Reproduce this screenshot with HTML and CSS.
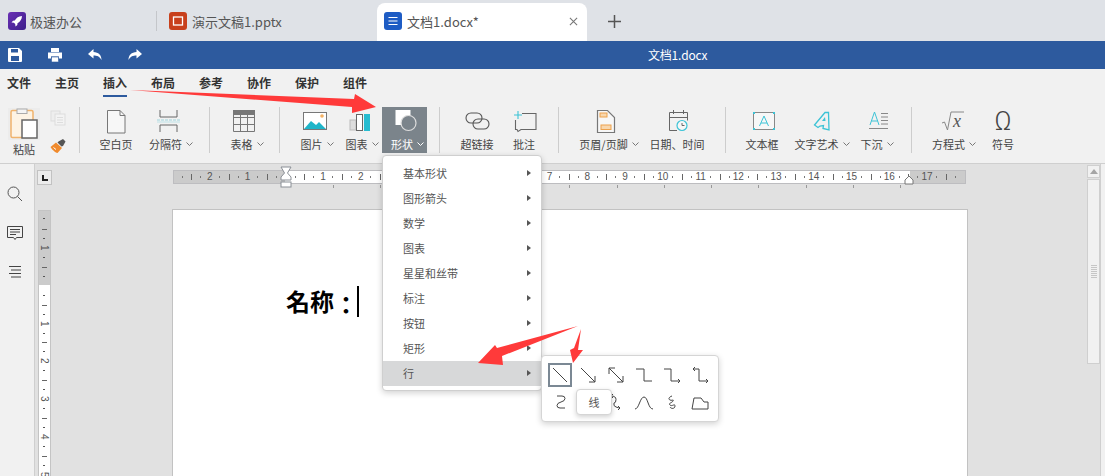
FILE: index.html
```html
<!DOCTYPE html>
<html lang="zh">
<head>
<meta charset="utf-8">
<title>文档1.docx</title>
<link rel="stylesheet" href="styles.css">
</head>
<body>
<div class="app">
  <div class="tabbar">
    <div class="tab tab-home">
      <svg class="tab-icon" viewBox="0 0 18 18"><defs><linearGradient id="pg" x1="0" y1="0" x2="1" y2="1"><stop offset="0" stop-color="#6a2fb5"/><stop offset="1" stop-color="#3c1f8a"/></linearGradient></defs><rect width="18" height="18" rx="3" fill="url(#pg)"/><path d="M14 4c-3.500.2-5.600 1.800-7.200 4.500L5 8.700 3.500 10.500l2.400.3 1.300 1.300.3 2.400 1.800-1.500.2-1.800C12.200 9.600 13.800 7.500 14 4z" fill="#fff"/></svg>
      <span>极速办公</span>
    </div>
    <div class="tab tab-ppt">
      <svg class="tab-icon" viewBox="0 0 18 18"><rect width="18" height="18" rx="3" fill="#c8401c"/><rect x="4.500" y="5" width="9" height="8" fill="none" stroke="#fff" stroke-width="1.300"/></svg>
      <span>演示文稿1.pptx</span>
    </div>
    <div class="tab tab-active">
      <svg class="tab-icon" viewBox="0 0 18 18"><rect width="18" height="18" rx="3" fill="#1e5cc4"/><path d="M4.500 5.500h9M4.500 9h9M4.500 12.500h9" stroke="#fff" stroke-width="1.200"/></svg>
      <span class="tab-name">文档1.docx*</span>
      <svg class="tab-close" viewBox="0 0 10 10"><path d="M1 1l8 8M9 1l-8 8" stroke="#777" stroke-width="1.200"/></svg>
    </div>
    <svg class="tab-plus" viewBox="0 0 13 13"><path d="M6.500 0v13M0 6.500h13" stroke="#555" stroke-width="1.500"/></svg>
  </div>

  <div class="titlebar">
    <div class="quick">
      <svg class="quick-icon" viewBox="0 0 16 16"><path d="M2 1h10l3 3v10a1 1 0 0 1-1 1H2a1 1 0 0 1-1-1V2a1 1 0 0 1 1-1z" fill="#fff"/><rect x="4" y="2" width="7" height="3.500" fill="#2d5a9e"/><rect x="4" y="9" width="8" height="5" fill="#2d5a9e"/></svg>
      <svg class="quick-icon" viewBox="0 0 16 16"><rect x="4" y="1" width="8" height="4" fill="#fff"/><path d="M1 5.500h14v6h-3v-2H4v2H1z" fill="#fff"/><rect x="4.500" y="10" width="7" height="5" fill="#fff" stroke="#2d5a9e" stroke-width=".6"/></svg>
      <svg class="quick-icon" viewBox="0 0 16 16"><path d="M6.500 2L1 7l5.500 4.500V8.500c3.500 0 6 .8 8 4.500 0-5-3-7.800-8-8z" fill="#fff"/></svg>
      <svg class="quick-icon" viewBox="0 0 16 16"><path d="M9.500 2L15 7l-5.500 4.500V8.500c-3.500 0-6 .8-8 4.500 0-5 3-7.800 8-8z" fill="#fff"/></svg>
    </div>
    <div class="doc-title">文档1.docx</div>
  </div>

  <nav class="menubar">
    <span class="menu-item">文件</span>
    <span class="menu-item">主页</span>
    <span class="menu-item menu-current">插入</span>
    <span class="menu-item">布局</span>
    <span class="menu-item">参考</span>
    <span class="menu-item">协作</span>
    <span class="menu-item">保护</span>
    <span class="menu-item">组件</span>
  </nav>

  <div class="toolbar">
    <div class="tool tool-paste">
      <svg class="icon-paste" viewBox="0 0 32 32"><rect x="3" y="2.500" width="22" height="27" rx="1.500" fill="#fdf3e4" stroke="#f0b36c" stroke-width="1.500"/><rect x="9" y="1" width="10" height="4.500" fill="#f4f4f4" stroke="#aaa"/><rect x="14" y="12" width="15" height="18" fill="#fff" stroke="#666" stroke-width="1.500"/></svg>
      <span class="tool-label">粘贴</span>
    </div>
    <div class="tool-stack">
      <svg class="icon-small" viewBox="0 0 16 16"><rect x="1" y="1" width="9" height="10" fill="#eee" stroke="#ddd"/><rect x="5" y="4" width="10" height="11" fill="#f3f3f3" stroke="#ddd"/><path d="M7 7.500h6M7 10h6M7 12.500h6" stroke="#ddd"/></svg>
      <svg class="icon-small" viewBox="0 0 16 16"><path d="M6 4.500L12 10l-4.500 5C5 14.500 1.500 11 .5 9z" fill="#f08a2c"/><path d="M3.500 9.500l2.500 2" stroke="#fff"/><path d="M8.500 3.500L13 1l2.500 2.500L13 8l-1.500.5-4-4z" fill="#555"/></svg>
    </div>
    <i class="sep sep-a"></i>
    <div class="tool w-blank">
      <svg class="tool-icon" viewBox="0 0 32 26"><path d="M7.500 2.500H20l5 5v17.500H7.500z" fill="#f7f7f7" stroke="#777"/><path d="M20 2.500v5h5" fill="none" stroke="#777"/></svg>
      <span class="tool-label">空白页</span>
    </div>
    <div class="tool w-break">
      <svg class="tool-icon icon-left" viewBox="0 0 32 26"><path d="M8 2v7h17V2M8 24v-7h17v7" fill="none" stroke="#666"/><path d="M5 12h23" stroke="#9fd6de" stroke-width="1.200" stroke-dasharray="3 1"/><path d="M5 14h23" stroke="#bfe3e8"/></svg>
      <span class="tool-label">分隔符<svg class="chev" viewBox="0 0 7 4"><path d="M.5.500L3.500 3.500 6.500.5" fill="none" stroke="#777"/></svg></span>
    </div>
    <i class="sep sep-b"></i>
    <div class="tool w-table">
      <svg class="tool-icon" viewBox="0 0 32 26"><rect x="5" y="2" width="22" height="5" fill="#777"/><path d="M5.500 2.500h21v21h-21zM5.500 9.500h21M5.500 16.500h21M12.500 2.500v21M19.500 2.500v21" fill="none" stroke="#777"/></svg>
      <span class="tool-label">表格<svg class="chev" viewBox="0 0 7 4"><path d="M.5.500L3.500 3.500 6.500.5" fill="none" stroke="#777"/></svg></span>
    </div>
    <i class="sep sep-b"></i>
    <div class="tool w-picture">
      <svg class="tool-icon" viewBox="0 0 32 26"><rect x="4.500" y="4.500" width="23" height="17" fill="#fff" stroke="#777"/><path d="M5 21l7-8 5 4 3-3 7 7z" fill="#1fb5c9"/><circle cx="23" cy="8" r="1.800" fill="#f4b264"/></svg>
      <span class="tool-label">图片<svg class="chev" viewBox="0 0 7 4"><path d="M.5.500L3.500 3.500 6.500.5" fill="none" stroke="#777"/></svg></span>
    </div>
    <div class="tool w-chart">
      <svg class="tool-icon" viewBox="0 0 32 26"><rect x="6" y="12" width="6" height="10" fill="#ddd" stroke="#bbb"/><rect x="12.500" y="6.500" width="6" height="16" fill="#fff" stroke="#666"/><rect x="20" y="6" width="6" height="17" fill="#27bcd0"/></svg>
      <span class="tool-label">图表<svg class="chev" viewBox="0 0 7 4"><path d="M.5.500L3.500 3.500 6.500.5" fill="none" stroke="#777"/></svg></span>
    </div>
    <div class="tool w-shape">
      <svg class="tool-icon" viewBox="0 0 32 26"><rect x="6.500" y="2" width="15" height="15" fill="#fff"/><circle cx="19.500" cy="15" r="7.500" fill="#7b848b" stroke="#ddd" stroke-width="1.200"/></svg>
      <span class="tool-label">形状<svg class="chev" viewBox="0 0 7 4"><path d="M.5.500L3.500 3.500 6.500.5" fill="none" stroke="#fff"/></svg></span>
    </div>
    <i class="sep sep-c"></i>
    <div class="tool w-link">
      <svg class="tool-icon" viewBox="0 0 32 26"><rect x="5" y="5" width="16" height="10" rx="5" fill="none" stroke="#555" stroke-width="1.100"/><rect x="12" y="11" width="16" height="10" rx="5" fill="none" stroke="#555" stroke-width="1.100"/></svg>
      <span class="tool-label">超链接</span>
    </div>
    <div class="tool w-note">
      <svg class="tool-icon" viewBox="0 0 32 26"><path d="M14 5.500h14v16H13l-3 2-1-2H7.500V12" fill="none" stroke="#666" stroke-width="1.100"/><path d="M10 3v8M6 7h8" stroke="#3cc3d6" stroke-width="1.100"/></svg>
      <span class="tool-label">批注</span>
    </div>
    <i class="sep sep-d"></i>
    <div class="tool w-header">
      <svg class="tool-icon" viewBox="0 0 32 26"><path d="M6.500 2.500h10l7 7v15h-17z" fill="#f7f7f7" stroke="#777" stroke-width="1.200"/><rect x="9" y="5" width="7" height="4" fill="#f8d7ae" stroke="#eda24d"/><rect x="10" y="17" width="10" height="4.500" fill="#f8d7ae" stroke="#eda24d"/></svg>
      <span class="tool-label">页眉/页脚<svg class="chev" viewBox="0 0 7 4"><path d="M.5.500L3.500 3.500 6.500.5" fill="none" stroke="#777"/></svg></span>
    </div>
    <div class="tool w-date">
      <svg class="tool-icon" viewBox="0 0 32 26"><path d="M16 22.500H8.500v-18h18v8M8.500 9.500h18M12.500 2v4M22.500 2v4" fill="none" stroke="#666"/><circle cx="21" cy="17.500" r="5" fill="#f7f7f7" stroke="#3cc3d6" stroke-width="1.200"/><path d="M21 15v2.500h2.500" fill="none" stroke="#666"/></svg>
      <span class="tool-label">日期、时间</span>
    </div>
    <i class="sep sep-e"></i>
    <div class="tool w-textbox">
      <svg class="tool-icon" viewBox="0 0 32 26"><rect x="7.500" y="4.500" width="21" height="17" fill="#f7f7f7" stroke="#888"/><path d="M13.500 18l4.500-10 4.500 10M15 15h6" fill="none" stroke="#3cc3d6"/><g fill="#3cc3d6"><rect x="7" y="4" width="2" height="2"/><rect x="27" y="4" width="2" height="2"/><rect x="7" y="20" width="2" height="2"/><rect x="27" y="20" width="2" height="2"/></g></svg>
      <span class="tool-label">文本框</span>
    </div>
    <div class="tool w-art">
      <svg class="tool-icon" viewBox="0 0 32 26"><path d="M8.500 17L19 4.500h3.500l.5 17.500-6-1.500.5-3-3.500.5-2 1.500z" fill="none" stroke="#3cc3d6" stroke-width="1.300"/><path d="M16 13l3-4 .5 4z" fill="#3cc3d6"/></svg>
      <span class="tool-label">文字艺术<svg class="chev" viewBox="0 0 7 4"><path d="M.5.500L3.500 3.500 6.500.5" fill="none" stroke="#777"/></svg></span>
    </div>
    <div class="tool w-drop">
      <svg class="tool-icon" viewBox="0 0 32 26"><path d="M9 17l4.500-13L18 17M10.500 13h6" fill="none" stroke="#3cc3d6"/><path d="M20 5.500h7M20 9h7M20 12.500h7M20 16h7M8 20.500h19" stroke="#888"/></svg>
      <span class="tool-label">下沉<svg class="chev" viewBox="0 0 7 4"><path d="M.5.500L3.500 3.500 6.500.5" fill="none" stroke="#777"/></svg></span>
    </div>
    <i class="sep sep-f"></i>
    <div class="tool w-eq">
      <svg class="tool-icon" viewBox="0 0 32 26"><path d="M6 15l2.500-1 3 8L15 4h13" fill="none" stroke="#888"/><text class="eq-x" x="17" y="19">x</text></svg>
      <span class="tool-label">方程式<svg class="chev" viewBox="0 0 7 4"><path d="M.5.500L3.500 3.500 6.500.5" fill="none" stroke="#777"/></svg></span>
    </div>
    <div class="tool w-sym">
      <span class="omega">Ω</span>
      <span class="tool-label">符号</span>
    </div>
  </div>

  <div class="workspace">
    <aside class="sidebar">
      <svg class="side-icon" viewBox="0 0 16 16"><circle cx="6.500" cy="6.500" r="5.500" fill="none" stroke="#555"/><path d="M10.500 10.500L15 15" stroke="#555"/></svg>
      <svg class="side-icon" viewBox="0 0 16 16"><path d="M.5 1.500h15v11H9.500L8 14.500 6.500 12.500H.5z" fill="none" stroke="#444"/><path d="M3 4.500h10M3 7h10M3 9.500h6" stroke="#444"/></svg>
      <svg class="side-icon" viewBox="0 0 16 16"><path d="M2 2.500h12M4 6h10M2 9.500h12M4 13h10" stroke="#444"/></svg>
    </aside>
    <main class="canvas">
      <div class="ruler-row">
        <div class="tab-stop"><i></i></div>
        <div class="hruler">
          <span class="hcell-start"></span>
          <span class="hcell">2</span><span class="hcell">1</span><span class="hcell"></span>
          <span class="hcell">1</span><span class="hcell">2</span><span class="hcell">3</span><span class="hcell">4</span><span class="hcell">5</span><span class="hcell">6</span><span class="hcell">7</span><span class="hcell">8</span><span class="hcell">9</span><span class="hcell">10</span><span class="hcell">11</span><span class="hcell">12</span><span class="hcell">13</span><span class="hcell">14</span><span class="hcell">15</span><span class="hcell">16</span><span class="hcell">17</span>
          <span class="hcell-end"></span>
        </div>
      </div>
      <div class="tab-marks"></div>
      <div class="page-row">
        <div class="vruler">
          <span class="vcell-start"></span>
          <span class="vcell">1</span><span class="vcell"></span><span class="vcell">1</span><span class="vcell">2</span><span class="vcell">3</span><span class="vcell">4</span><span class="vcell">5</span>
        </div>
        <div class="page">
          <p class="doc-line" lang="zh-Hant">名称<span class="colon">：</span><i class="caret"></i></p>
        </div>
      </div>
    </main>
    <div class="scrollbar">
      <div class="scroll-btn"><i></i></div>
      <div class="scroll-thumb"><i></i></div>
    </div>
    <div class="edge"></div>
  </div>

  <svg class="indent indent-left" viewBox="0 0 12 22"><path d="M1 1h10L7.500 7 11 11v3H1v-3l3.500-4z" fill="#fff" stroke="#8a8f96"/><rect x="1" y="16" width="10" height="5" fill="#fff" stroke="#8a8f96"/></svg>
  <svg class="indent indent-right" viewBox="0 0 10 10"><path d="M1 9V5l4-4 4 4v4z" fill="#fff" stroke="#777"/></svg>

  <ul class="shape-menu">
    <li class="shape-item">基本形状</li>
    <li class="shape-item">图形箭头</li>
    <li class="shape-item">数学</li>
    <li class="shape-item">图表</li>
    <li class="shape-item">星星和丝带</li>
    <li class="shape-item">标注</li>
    <li class="shape-item">按钮</li>
    <li class="shape-item">矩形</li>
    <li class="shape-item shape-hover">行</li>
  </ul>

  <div class="line-menu">
    <svg class="line-cell line-selected" viewBox="0 0 24 24"><path d="M5 5l14 14"/></svg>
    <svg class="line-cell" viewBox="0 0 24 24"><path d="M5 5l14 14M19 13v6h-6"/></svg>
    <svg class="line-cell" viewBox="0 0 24 24"><path d="M5 5l14 14M19 13v6h-6M5 11V5h6"/></svg>
    <svg class="line-cell" viewBox="0 0 24 24"><path d="M4 6h8v12h8"/></svg>
    <svg class="line-cell" viewBox="0 0 24 24"><path d="M4 6h7v12h9M18 16l2 2-2 2"/></svg>
    <svg class="line-cell" viewBox="0 0 24 24"><path d="M5 6h6v12h9M7 4L5 6l2 2M18 16l2 2-2 2"/></svg>
    <svg class="line-cell" viewBox="0 0 24 24"><path d="M9 5h5q3 0 3 2.500T13 11q-4 1-4 3.500T12 17h5"/></svg>
    <svg class="line-cell" viewBox="0 0 24 24"><path d="M5 5h5q3 0 3 2.500T9 11"/></svg>
    <svg class="line-cell" viewBox="0 0 24 24"><path d="M7 5q5 0 5 3.500T10 12q-1 3 2 4 3 1 4 1M14 15l2 2-2 2M9 3L7 5l2 2"/></svg>
    <svg class="line-cell" viewBox="0 0 24 24"><path d="M3 18C7 18 8 6 12 6s4 12 9 12"/></svg>
    <svg class="line-cell" viewBox="0 0 24 24"><path d="M12 5c-3 1-4 3-2 4s4-1 3 1-5 2-3 4 5-2 5 1-4 3-5 1"/></svg>
    <svg class="line-cell" viewBox="0 0 24 24"><path d="M4 18L6 7h7l3 4h4v7z"/></svg>
  </div>
  <div class="tooltip">线</div>

  <svg class="arrows" viewBox="0 0 1105 476">
    <path d="M130 90L354 99 355 94 376 107 352 113 352 107z"/>
    <path d="M578 326L502 356 503 365 478 363 495 345 497 348z"/>
    <path d="M581 329L578 350 583 350 573 363 570 350 574 348z"/>
  </svg>
</div>
</body>
</html>
```

FILE: styles.css
```css
* { box-sizing: border-box; }
html, body { margin: 0; padding: 0; }
body { font-family: "Noto Sans CJK SC", "Noto Sans", sans-serif; color: #333; }

.app { position: relative; width: 1105px; height: 476px; overflow: hidden; display: flex; flex-direction: column; background: #f1f1f1; }

/* Tabs */
.tabbar { height: 41px; flex: none; display: flex; align-items: flex-end; background: #dfe2e7; padding-left: 8px; }
.tab { height: 38px; display: flex; align-items: center; gap: 5px; padding-bottom: 2px; font-size: 13px; color: #555; }
.tab-icon { width: 18px; height: 18px; flex: none; }
.tab-home { width: 148px; gap: 4px; }
.tab-ppt { width: 221px; padding-left: 13px; position: relative; }
.tab-ppt::before { content: ""; position: absolute; left: 0; top: 8px; width: 1px; height: 20px; background: #c4c6ca; }
.tab-active { width: 210px; background: #fff; border-radius: 8px 8px 0 0; padding: 0 9px 2px 7px; }
.tab-name { flex: 1; }
.tab-close { width: 9px; height: 9px; }
.tab-plus { width: 13px; height: 13px; margin: 0 0 13px 21px; }

/* Title bar */
.titlebar { height: 28px; flex: none; background: #2d5a9e; position: relative; display: flex; align-items: center; }
.quick { display: flex; gap: 24px; padding-left: 7px; }
.quick-icon { width: 16px; height: 16px; }
.doc-title { position: absolute; left: 648px; top: 4px; font-size: 12px; line-height: 20px; color: #fff; letter-spacing: -.2px; }

/* Menu */
.menubar { height: 34px; flex: none; display: flex; padding-left: 7px; gap: 24px; background: #f1f1f1; }
.menu-item { width: 24px; height: 28px; font-size: 12px; line-height: 28px; font-weight: 700; color: #333; white-space: nowrap; }
.menu-current { border-bottom: 2px solid #2d5a9e; }

/* Toolbar */
.toolbar { height: 61px; flex: none; display: flex; padding-top: 4px; border-bottom: 1px solid #cfcfcf; background: #f1f1f1; }
.tool { height: 46px; flex: none; display: flex; flex-direction: column; align-items: center; padding-top: 1px; }
.tool-icon { width: 32px; height: 26px; flex: none; }
.icon-left { margin-right: 6px; }
.tool-label { display: flex; align-items: center; font-size: 11px; line-height: 16px; margin-top: 2px; white-space: nowrap; color: #444; }
.chev { width: 7px; height: 4px; margin-left: 4px; }
.tool-paste { width: 46px; align-items: flex-start; padding-left: 8px; height: 54px; }
.tool-paste .tool-label { margin: 1px 0 0 5px; }
.icon-paste { width: 32px; height: 32px; background: #ececec; }
.tool-stack { width: 24px; display: flex; flex-direction: column; align-items: center; gap: 12px; padding-top: 3px; }
.icon-small { width: 16px; height: 16px; }
.sep { display: block; flex: none; width: 1px; height: 46px; background: #cdcdcd; }
.sep-a { margin: 0 8px 0 9px; }
.sep-b { margin: 0 10px 0 11px; }
.sep-c { margin: 0 11px 0 12px; }
.sep-d { margin: 0 12px 0 13px; }
.sep-e { margin: 0 13px 0 14px; }
.sep-f { margin: 0 15px 0 16px; }
.w-blank { width: 56px; }
.w-break { width: 54px; }
.w-table { width: 48px; }
.w-picture { width: 50px; }
.w-chart { width: 40px; margin-right: 2px; }
.w-shape { width: 45px; background: #7b848b; }
.w-shape .tool-label { color: #fff; }
.w-table .tool-label, .w-shape .tool-label { margin-left: 6px; }
.w-picture .tool-label, .w-chart .tool-label, .w-header .tool-label, .w-eq .tool-label { margin-left: 4px; }
.w-link { width: 52px; }
.w-note { width: 42px; }
.w-header { width: 72px; }
.w-date { width: 68px; }
.w-textbox { width: 46px; }
.w-art { width: 74px; }
.w-drop { width: 36px; }
.w-eq { width: 50px; }
.w-sym { width: 52px; }
.eq-x { font-family: "Liberation Serif", serif; font-style: italic; font-size: 18px; fill: #555; }
.omega { height: 26px; font-family: Roboto, sans-serif; font-weight: 300; font-size: 26px; line-height: 26px; color: #444; }

/* Workspace */
.workspace { flex: 1; display: flex; min-height: 0; }
.sidebar { width: 35px; flex: none; display: flex; flex-direction: column; align-items: center; gap: 23px; padding: 22px 4px 0 0; background: #f1f1f1; border-right: 1px solid #cfcfcf; }
.side-icon { width: 16px; height: 16px; }
.canvas { width: 1052px; flex: none; background: #e1e1e1; padding-top: 6px; }
.ruler-row { display: flex; height: 15px; }
.tab-stop { width: 15px; height: 15px; margin-left: 2px; border: 1px solid #c2c2c2; background: #ececec; position: relative; }
.tab-stop i { position: absolute; left: 4px; top: 4px; width: 6px; height: 6px; border-left: 2px solid #222; border-bottom: 2px solid #222; }
.hruler { width: 793px; height: 14px; margin-left: 121px; display: flex; box-shadow: inset 0 0 0 1px #bdbdc0; background: linear-gradient(to right, #cbcbcb 112px, #fff 112px, #fff 737px, #cbcbcb 737px); }
.hcell, .hcell-start, .hcell-end { display: block; flex: none; height: 14px; font: 10px/14px "Liberation Sans", sans-serif; color: #555; text-align: center; }
.hcell { width: 37.75px; background: linear-gradient(#777, #777) 9px 6px / 1px 2px no-repeat, linear-gradient(#777, #777) 28px 6px / 1px 2px no-repeat, linear-gradient(#666, #666) 0 4px / 1px 6px no-repeat; }
.hcell-start { width: 18px; background: linear-gradient(#777, #777) 9px 6px / 1px 2px no-repeat; }
.hcell-end { width: 20px; background: linear-gradient(#777, #777) 9px 6px / 1px 2px no-repeat, linear-gradient(#666, #666) 0 4px / 1px 6px no-repeat; }
.tab-marks { width: 570px; height: 3px; margin: 0 0 21px 298px; background: repeating-linear-gradient(to right, #999 0 1px, transparent 1px 47.25px); }
.page-row { display: flex; align-items: flex-start; }
.vruler { width: 13px; height: 270px; margin: 1px 0 0 3px; flex: none; box-shadow: inset 0 0 0 1px #c4c4c4; background: linear-gradient(to bottom, #cbcbcb 75px, #fff 75px); }
.vcell, .vcell-start { display: block; width: 13px; font: 10px/13px "Liberation Sans", sans-serif; color: #555; writing-mode: vertical-rl; text-align: center; }
.vcell { height: 37.75px; background: linear-gradient(#555, #555) 5px 9px / 2px 1px no-repeat, linear-gradient(#555, #555) 5px 28px / 2px 1px no-repeat, linear-gradient(#666, #666) 4px 0 / 5px 1px no-repeat; }
.vcell-start { height: 19px; background: linear-gradient(#555, #555) 5px 8px / 2px 1px no-repeat; }
.page { width: 796px; height: 280px; margin-left: 121px; flex: none; background: #fff; border: 1px solid #c2c2c2; border-bottom: 0; padding: 75px 0 0 113px; }
.doc-line { margin: 0; display: flex; align-items: center; height: 32px; font-family: "Noto Sans CJK TC", "Noto Sans CJK SC", sans-serif; font-size: 24px; line-height: 32px; font-weight: 700; color: #000; }
.colon { margin-top: 6px; }
.caret { display: block; width: 2px; height: 31px; margin-left: -1px; background: #000; }

/* Scrollbar */
.scrollbar { width: 13px; flex: none; background: #e1e1e1; padding-top: 1px; }
.scroll-btn { height: 13px; border: 1px solid #cfcfcf; background: #f1f1f1; position: relative; }
.scroll-btn i { position: absolute; left: 2px; top: 3px; border: 4px solid transparent; border-bottom: 5px solid #a5a5a5; border-top: 0; }
.scroll-thumb { height: 185px; margin-top: 1px; border: 1px solid #cfcfcf; background: #f1f1f1; display: flex; justify-content: center; padding-top: 85px; }
.scroll-thumb i { display: block; width: 6px; height: 14px; background: repeating-linear-gradient(to bottom, #c6c6c6 0 1px, transparent 1px 2px); }
.edge { flex: 1; background: #f1f1f1; border-left: 1px solid #cfcfcf; }

/* Ruler markers */
.indent { position: absolute; }
.indent-left { left: 280px; top: 166px; width: 12px; height: 22px; }
.indent-right { left: 904px; top: 175px; width: 10px; height: 10px; }

/* Shape menu */
.shape-menu { position: absolute; left: 382px; top: 155px; width: 160px; height: 236px; margin: 0; padding: 5px 0 0; list-style: none; background: #fff; border: 1px solid #cfcfcf; border-radius: 4px; box-shadow: 0 2px 6px rgba(0, 0, 0, .18); }
.shape-item { position: relative; height: 25px; padding-left: 20px; font-size: 11px; line-height: 25px; color: #555; }
.shape-item::after { content: ""; position: absolute; right: 10px; top: 9px; border: 3px solid transparent; border-left: 4px solid #555; border-right: 0; }
.shape-hover { background: #d7d8d9; }

.line-menu { position: absolute; left: 541px; top: 355px; width: 178px; height: 67px; padding: 7px 0 0 6px; display: grid; grid-template-columns: repeat(6, 24px); grid-auto-rows: 24px; column-gap: 4px; row-gap: 4px; background: #fff; border: 1px solid #d5d5d5; border-radius: 4px; box-shadow: 0 2px 6px rgba(0, 0, 0, .18); }
.line-cell { width: 24px; height: 24px; fill: none; stroke: #444; stroke-width: 1; }
.line-selected { outline: 2px solid #7b8894; outline-offset: -2px; }
.tooltip { position: absolute; left: 576px; top: 389px; width: 36px; height: 26px; background: #fff; border: 1px solid #d5d5d5; border-radius: 4px; box-shadow: 0 2px 5px rgba(0, 0, 0, .18); font-size: 11px; line-height: 24px; text-align: center; color: #555; }

.arrows { position: absolute; left: 0; top: 0; width: 1105px; height: 476px; fill: #ff3a3a; pointer-events: none; }
```
